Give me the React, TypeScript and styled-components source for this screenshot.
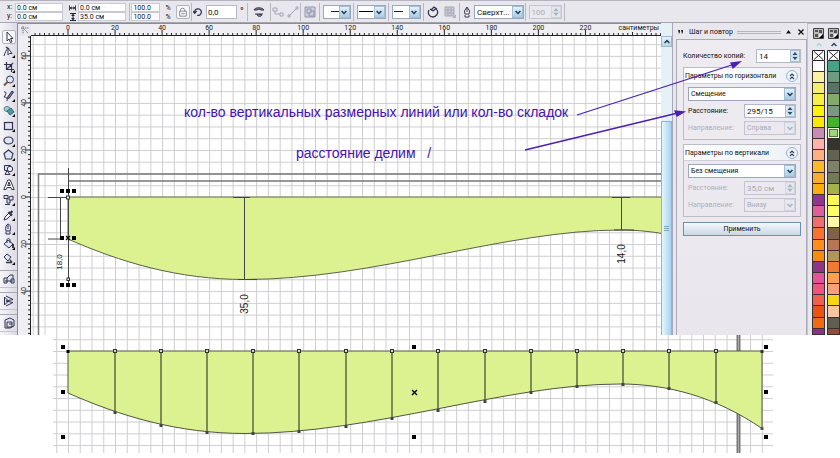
import React from "react";
import styled, { createGlobalStyle, css } from "styled-components";

const GlobalStyle = createGlobalStyle`
  * { box-sizing: border-box; }
  body { margin: 0; background: #fff; }
  button, input, select { font: inherit; color: inherit; margin: 0; }
`;

const line = "#a9a9b8";
const face = "#e9e7ee";

const Page = styled.main`
  position: relative;
  width: 100%;
  font: 7px/10px Roboto, "Open Sans", sans-serif;
  color: #111;
`;

const Workspace = styled.section`
  background: ${face};
`;

/* ---------- property bar ---------- */

const PropertyBar = styled.header`
  display: flex;
  align-items: stretch;
  height: 23px;
  padding: 2px 4px 1px 3px;
  border-top: 1px solid #b5b4be;
  border-bottom: 1px solid #a5a5ae;
  overflow: hidden;
`;

const Group = styled.div<{ $w: number; $gap?: number }>`
  display: flex;
  flex: 0 0 ${(p) => p.$w}px;
  align-items: center;
  justify-content: center;
  gap: ${(p) => p.$gap ?? 2}px;
  border-right: 1px solid #b9b8c4;
`;

const FieldStack = styled.div`
  display: grid;
  grid-template-rows: 9px 9px;
`;

const StackRow = styled.label`
  display: flex;
  align-items: center;
  gap: 2px;
  line-height: 9px;
`;

const Mark = styled.span`
  display: flex;
  justify-content: center;
  width: 7px;
`;

const SmallField = styled.input<{ $w: number }>`
  width: ${(p) => p.$w}px;
  height: 9px;
  padding: 0 1px;
  border: 1px solid #c9c8d4;
  background: #fff;
  line-height: 7px;
`;

const AngleField = styled.input`
  width: 31px;
  height: 14px;
  padding: 0 1px;
  border: 1px solid #b9b8c6;
  background: #fff;
  font-size: 8px;
`;

const Degree = styled.span`
  width: 6px;
  font-size: 10px;
`;

const ToolButton = styled.button<{ $boxed?: boolean }>`
  display: flex;
  flex: none;
  align-items: center;
  justify-content: center;
  width: 14px;
  height: 14px;
  padding: 0;
  border: 1px solid ${(p) => (p.$boxed ? "#b4b3c2" : "transparent")};
  border-radius: 2px;
  background: ${(p) => (p.$boxed ? "#f7f7fa" : "transparent")};
`;

const SelectBox = styled.div<{ $w?: number; $large?: boolean }>`
  position: relative;
  height: 14px;
  ${(p) => (p.$w ? css`flex: 0 0 ${p.$w}px;` : css`flex: 1;`)}
  min-width: 0;
  font-size: ${(p) => (p.$large ? 8 : 7)}px;
`;

const Select = styled.select`
  appearance: none;
  display: block;
  width: 100%;
  height: 14px;
  padding: 0 12px 0 2px;
  border: 1px solid #9aa7bd;
  border-radius: 0;
  background: #fff;
  line-height: 11px;
  &:disabled { background: #ebe9ef; border-color: #c5c4d0; color: #a9a9b4; opacity: 1; }
`;

const DropArrow = styled.span<{ $off?: boolean }>`
  position: absolute;
  top: 1px;
  right: 1px;
  display: flex;
  align-items: center;
  justify-content: center;
  width: 11px;
  height: 12px;
  background: ${(p) => (p.$off ? "#e7e7ef" : "linear-gradient(#e4f2fb, #a9cbe2)")};
  border: 1px solid ${(p) => (p.$off ? "#d2d3de" : "#a3bfd4")};
  pointer-events: none;
`;

const LineSample = styled.svg`
  position: absolute;
  top: 5px;
  left: 2px;
  pointer-events: none;
`;

const Chevron = ({ up, color = "#1d3c58" }: { up?: boolean; color?: string }) => (
  <svg width="6" height="5" viewBox="0 0 6 5">
    <path d={up ? "M.6 4 3 1.500 5.400 4" : "M.6 1 3 3.500 5.400 1"} fill="none" stroke={color} strokeWidth="1.500" />
  </svg>
);

type DropProps = { label: string; value?: string; w?: number; off?: boolean; large?: boolean; children?: React.ReactNode };
const Drop = ({ label, value = "", w, off, large, children }: DropProps) => (
  <SelectBox $w={w} $large={large}>
    <Select aria-label={label} disabled={off} defaultValue={value}>
      <option>{value}</option>
    </Select>
    {children}
    <DropArrow $off={off}><Chevron color={off ? "#a6b2c2" : undefined} /></DropArrow>
  </SelectBox>
);

/* ---------- icons ---------- */

const ink = "#33334c";
const Icon = ({ children, size = 12, color = ink }: { children: React.ReactNode; size?: number; color?: string }) => (
  <svg width={size} height={size} viewBox="0 0 12 12" fill="none" stroke={color} strokeWidth="1" aria-hidden="true">
    {children}
  </svg>
);
const Flyout = () => <path d="M12 9v3H9z" fill="#000" stroke="none" />;

const tools: { name: string; art: React.ReactNode; flat?: boolean }[] = [
  { name: "Pick", flat: true, art: <path d="M4 1v9l2-2 1.5 3.5 1.5-.7L7.5 7.5H10z" fill="#fff" /> },
  { name: "Shape", art: <><path d="M1 10C2 7 3 4 5 2M5 2v7l1.500-1.500h2.500z" fill="#fff" /><path d="M3 1l3 2" strokeWidth="1.500" /></> },
  { name: "Crop", art: <path d="M3.500 1v7.500H11M1 3.500h7.500V11M3.500 8.500 10 2" strokeWidth="1.200" /> },
  { name: "Zoom", art: <><circle cx="7" cy="4.500" r="3.500" fill="#dce6f4" /><path d="M4.500 7 1 10.500" stroke="#765b45" strokeWidth="2" /></> },
  { name: "Freehand", art: <><path d="M1 2c3-1 2 3 0 5 2 0 4 1 3 4" /><path d="M4 8 9 1l1.500 1L6 8.500z" fill="#777b92" /></> },
  { name: "Smart fill", art: <><ellipse cx="4" cy="4" rx="3" ry="2.500" fill="#9cced2" stroke="#54888f" /><path d="M4 6l4-3 3 4-4 3z" fill="#4b9ca2" stroke="#2f6570" /></> },
  { name: "Rectangle", art: <rect x="1.500" y="2.500" width="8" height="7" fill="#dfe4f4" strokeWidth="1.200" /> },
  { name: "Ellipse", art: <ellipse cx="5.500" cy="5.500" rx="4.500" ry="3.500" fill="#dfe4f4" strokeWidth="1.200" /> },
  { name: "Polygon", art: <path d="M5.500 1 10 4.500 8.500 10h-6L1 4.500z" fill="#dfe4f4" strokeWidth="1.100" /> },
  { name: "Basic shapes", art: <><path d="M1.500 1.500h6v5h-6z" fill="#dfe4f4" /><circle cx="7" cy="5" r="2.700" fill="#eef" /><path d="M2 10.500l2-4 3 4z" fill="#dfe4f4" /></> },
  { name: "Text", flat: true, art: <path d="M.8 10.500h2.400L4 8.500h4l.8 2h2.400L7.200 1H4.800zM4.700 6.500 6 3l1.300 3.500z" fill="#fff" /> },
  { name: "Blend", art: <><path d="M1 1.500h4v3H1zM6 3l4-1v4H6zM4 5v4h3V6" fill="#dfe4f4" /><path d="M2 10.500h5" /></> },
  { name: "Eyedropper", art: <><path d="M1 11l1-3 4-4 2 2-4 4z" fill="#f4f4fb" /><path d="M5.500 3l3.500 3.500M7 4.500 9.500 2" strokeWidth="2.200" /></> },
  { name: "Outline", art: <path d="M5 1c3 1 3 4 2 7H3C2 5 3 2 5 1zM5 2v4M3 8.500v2.500h4V8.500" fill="#dfe4f4" /> },
  { name: "Fill", art: <><path d="M1 6l4-4 5 4-4 4z" fill="#dfe4f4" /><path d="M4 5V2c0-2 3-2 3 0v3" /><path d="M10 6v4" stroke="#111" strokeWidth="1.600" /></> },
  { name: "Interactive fill", art: <><path d="M1 4l3-3 4 3-3 4z" fill="#dfe4f4" /><path d="M3 9.500h6M7 7l2 2.500" strokeWidth="1.500" /></> },
];

const extras: { name: string; art: React.ReactNode }[] = [
  { name: "Wrap text", art: <><path d="M1 10V5h3v5zM4 5l3-3h3v4M8 6h3v4H8z" fill="#dfe4f4" /><path d="M2 8h8" /></> },
  { name: "Mirror", art: <path d="M1.500 2v8l4-4zM3 1l7 3.500L3 6M3 11l7-3.500L3 6" fill="#dfe4f4" /> },
  { name: "Convert", art: <><path d="M2 3l5-2 4 2v6l-4 2H2z" fill="#dfe4f4" /><path d="M4 5h5v5H4zM6 7h3" /></> },
];

const Main = styled.div`
  display: flex;
  min-height: 312px;
`;

const Toolbox = styled.nav`
  flex: 0 0 18px;
  display: flex;
  flex-direction: column;
  gap: 4px;
  padding-top: 7px;
  border-right: 1px solid #8c8c99;
  background: linear-gradient(90deg, #f6f5f9, #dcdbe5);
`;

const ToolColumn = styled.div`
  display: flex;
  flex-direction: column;
  align-items: center;
  justify-content: space-between;
  height: 236px;
`;

const ExtraTool = styled.div`
  display: flex;
  justify-content: center;
  padding: 1px 0;
  border-top: 1px solid #a9a8b8;
  border-bottom: 1px solid #c4c3d0;
`;

/* ---------- drawing window ---------- */

const DrawWindow = styled.div`
  flex: 1;
  min-width: 0;
  display: grid;
  grid-template: 13px 1fr / 13px minmax(0, 1fr);
`;

const Corner = styled.div`
  display: flex;
  align-items: center;
  justify-content: center;
  border-top: 1px solid #8c8c99;
  background: ${face};
`;

const TopRulerBox = styled.div`
  position: relative;
  border-top: 1px solid #8c8c99;
  background: #efeef2;
  overflow: hidden;
`;

const Units = styled.span`
  position: absolute;
  top: 0;
  right: 2px;
  padding-left: 2px;
  background: #efeef2;
  line-height: 8px;
`;

const SideRulerBox = styled.div`
  background: #efeef2;
  overflow: hidden;
`;

const Canvas = styled.div`
  position: relative;
  background: #fff;
  overflow: hidden;
`;

const Drawing = styled.svg`
  display: block;
  width: 100%;
  height: 100%;
`;

const Note = styled.p<{ $x: number; $y: number }>`
  position: absolute;
  left: ${(p) => p.$x}px;
  top: ${(p) => p.$y}px;
  margin: 0;
  color: #4413b0;
  font: 14px/16px "Liberation Sans", Arial, sans-serif;
  white-space: pre;
`;

const range = (from: number, to: number) => Array.from({ length: to - from }, (_, i) => from + i);
const unit = 2.352;

const TopRuler = () => (
  <TopRulerBox>
    <Drawing>
      <g stroke="#222" strokeWidth="1">
        <path d="M0 11.5H3000" />
        {range(-7, 500).map((n) => {
          const x = 37 + n * 2 * unit;
          return <path key={n} d={`M${x} ${n % 10 === 0 ? 6 : 9}V12`} />;
        })}
      </g>
      <g fontSize="7" textAnchor="middle" fill="#222">
        {range(0, 12).map((n) => <text key={n} x={37 + n * 20 * unit} y="6">{n * 20}</text>)}
      </g>
    </Drawing>
    <Units>сантиметры</Units>
  </TopRulerBox>
);

const SideRuler = () => (
  <SideRulerBox>
    <Drawing>
      <g stroke="#222" strokeWidth="1">
        <path d="M12.500 0V3000" />
        {range(-34, 300).map((n) => {
          const y = 161 + n * 2 * unit;
          return <path key={n} d={`M${n % 10 === 0 ? 7 : 10} ${y}H13`} />;
        })}
      </g>
      <g fontSize="7" textAnchor="middle" fill="#222">
        {[-60, -40, -20, 0, 20, 40].map((n) => (
          <text key={n} transform={`translate(8 ${161 + n * unit}) rotate(-90)`}>{Math.abs(n)}</text>
        ))}
      </g>
    </Drawing>
  </SideRulerBox>
);

const Grid = ({ id, x, y }: { id: string; x: number; y: number }) => (
  <pattern id={id} x={x} y={y} width="11.760" height="11.760" patternUnits="userSpaceOnUse">
    <path d="M.5 0V12M0 .5H12" stroke="#cdccd0" strokeWidth="1" />
  </pattern>
);

const hem = "M68 42C120 65 178 82.500 245 82.500C375 82.500 505 33 620 33C668 33 716 46 762 77.500";
const shape = `${hem}V0H68Z`;

const Handles = ({ points }: { points: number[][] }) => (
  <g fill="#000">
    {points.map(([x, y]) => <rect key={`${x}-${y}`} x={x - 2} y={y - 2} width="4" height="4" />)}
  </g>
);

const MainDrawing = () => (
  <Drawing>
    <defs><Grid id="grid-main" x={68} y={197} /></defs>
    <g transform="translate(-31 -36)">
      <rect x="31" y="36" width="3000" height="2000" fill="url(#grid-main)" />
      <path d="M38.500 2000V174H3000" fill="none" stroke="#777" strokeWidth="1.500" />
      <path d="M68 181H3000" stroke="#777" strokeWidth="1.500" />
      <g transform="translate(0 197)"><path d={shape} fill="#dcf18f" stroke="#59624a" /></g>
      <g stroke="#444" fill="none">
        <path d="M68.500 168V284M48 197.500H68M48 239H61M60.500 197V239" />
        <path d="M244.500 197V279M233 197.500H250M238 279.500H257" />
        <path d="M621.500 197V230M612 197.500H630M614 230H634" />
      </g>
      <g stroke="#333" fill="#eee"><rect x="66.500" y="196" width="3" height="3" /><rect x="67" y="278" width="2.500" height="2.500" /></g>
      <Handles points={[[62, 191], [68, 191], [74, 191], [62, 238], [74, 238], [62, 285], [68, 285], [74, 285]]} />
      <path d="M66 236l4 4M70 236l-4 4" stroke="#000" strokeWidth="1.300" />
      <g fontFamily="Liberation Sans, Arial, sans-serif" fill="#222" textAnchor="middle">
        <text fontSize="8" transform="translate(62 262) rotate(-90)">18,0</text>
        <text fontSize="10" transform="translate(248 304) rotate(-90)">35,0</text>
        <text fontSize="10" transform="translate(625 254) rotate(-90)">14,0</text>
      </g>
    </g>
  </Drawing>
);

/* ---------- docker ---------- */

const ScrollTrack = styled.div`
  flex: 0 0 11px;
  display: flex;
  flex-direction: column;
  padding-top: 13px;
  background: #e6f1f7;
`;

const ScrollUp = styled.button`
  display: flex;
  align-items: center;
  justify-content: center;
  height: 11px;
  padding: 0;
  border: 1px solid #9fb9cc;
  background: linear-gradient(#e6f3fb, #b8d4e6);
`;

const ScrollThumb = styled.div`
  flex: 1;
  display: flex;
  align-items: center;
  justify-content: center;
  margin-top: 74px;
  border: 1px solid #8fb4d0;
  border-bottom: 0;
  background: linear-gradient(90deg, #e6f6ff, #a6d2ee);
`;

const Docker = styled.aside`
  flex: 0 0 135px;
  display: flex;
  flex-direction: column;
  min-width: 0;
  padding-left: 3px;
  border-left: 1px solid #a9a8b8;
`;

const DockerTitle = styled.div`
  display: flex;
  align-items: center;
  gap: 3px;
  height: 16px;
  padding: 2px 2px 0;
`;

const DockerHeading = styled.h2`
  margin: 0 1px 0 2px;
  font: inherit;
`;

const TitleGrip = styled.span`
  flex: 1;
  height: 3px;
  border: solid #b4b3be;
  border-width: 1px 0;
`;

const PlainButton = styled.button`
  display: flex;
  align-items: center;
  justify-content: center;
  width: 9px;
  height: 9px;
  padding: 0;
  border: 0;
  background: none;
`;

const DockerBody = styled.form`
  flex: 1;
  padding: 9px 5px 0 6px;
  border: solid ${line};
  border-width: 1px 1px 0 1px;
  background: linear-gradient(#eeebf1, #e9e7ed);
`;

const FormRow = styled.div`
  display: flex;
  align-items: center;
  justify-content: space-between;
  height: 14px;
`;

const FormLabel = styled.label<{ $off?: boolean }>`
  color: ${(p) => (p.$off ? "#b0afba" : "#111")};
  white-space: nowrap;
`;

const Spin = styled.span<{ $w: number }>`
  position: relative;
  flex: 0 0 ${(p) => p.$w}px;
`;

const SpinInput = styled.input`
  display: block;
  width: 100%;
  height: 14px;
  padding: 0 12px 0 2px;
  border: 1px solid #b3b9c9;
  background: #fff;
  font-size: 8px;
  &:disabled { background: #ebe9ef; color: #a9a9b4; border-color: #c5c4d0; }
`;

const SpinArrows = styled.span<{ $off?: boolean }>`
  position: absolute;
  top: 1px;
  right: 1px;
  display: grid;
  background: ${(p) => (p.$off ? "#e6e8ee" : "#dbe8f0")};
  border: 1px solid ${(p) => (p.$off ? "#d2d5de" : "#adc0cf")};
`;

const Spinner = ({ id, value, w, off, label }: { id: string; value: string; w: number; off?: boolean; label?: string }) => (
  <Spin $w={w}>
    <SpinInput id={id} defaultValue={value} disabled={off} aria-label={label} />
    <SpinArrows $off={off}>
      <svg width="8" height="10" viewBox="0 0 8 10" fill={off ? "#a5b6c6" : "#24506f"}>
        <path d="M1.500 4 4 1l2.500 3zM1.500 6 4 9l2.500-3z" />
        <path d="M0 4.800h8v.5H0z" fill="#9ab1c2" />
      </svg>
    </SpinArrows>
  </Spin>
);

const Panel = styled.fieldset`
  min-width: 0;
  margin: 4px 0 0;
  padding: 0;
  border: 1px solid #bdbcc9;
`;

const PanelHead = styled.div`
  display: flex;
  align-items: center;
  justify-content: space-between;
  height: 16px;
  padding: 0 2px 0 1px;
  border-bottom: 1px solid #cfcfda;
  background: linear-gradient(90deg, #fff, #edf1f7);
  white-space: nowrap;
`;

const RoundButton = styled.button`
  display: flex;
  align-items: center;
  justify-content: center;
  width: 12px;
  height: 12px;
  padding: 0;
  border: 1px solid #9db1c9;
  border-radius: 50%;
  background: #eef5fb;
`;

const PanelBody = styled.div`
  display: grid;
  gap: 3px;
  padding: 3px 4px 4px;
`;

const Apply = styled.button`
  display: block;
  width: 100%;
  height: 14px;
  margin-top: 5px;
  padding: 0;
  border: 1px solid #6f8fae;
  background: linear-gradient(#f4f8fb, #c9d8e4);
  line-height: 11px;
`;

type PanelProps = { id: string; title: string; mode: string; distance: string; direction: string; off?: boolean };
const OffsetPanel = ({ id, title, mode, distance, direction, off }: PanelProps) => (
  <Panel aria-label={title}>
    <PanelHead>
      <span>{title}</span>
      <RoundButton type="button" aria-label={`Свернуть: ${title}`}>
        <svg width="8" height="8" viewBox="0 0 8 8" fill="none" stroke="#26476a" strokeWidth="1.200">
          <path d="M2 4 4 2l2 2M2 7l2-2 2 2" />
        </svg>
      </RoundButton>
    </PanelHead>
    <PanelBody>
      <FormRow><Drop label={title} value={mode} /></FormRow>
      <FormRow>
        <FormLabel $off={off} htmlFor={id}>Расстояние:</FormLabel>
        <Spinner id={id} value={distance} w={52} off={off} />
      </FormRow>
      <FormRow>
        <FormLabel as="span" $off>Направление:</FormLabel>
        <Drop label={`Направление: ${title}`} value={direction} w={52} off />
      </FormRow>
    </PanelBody>
  </Panel>
);

/* ---------- palettes ---------- */

const Palettes = styled.div`
  flex: 0 0 33px;
  display: flex;
  justify-content: flex-end;
  gap: 2px;
  padding: 4px 0 0;
  border-left: 1px solid #c5c4d0;
  border-top: 1px solid #b9b8c4;
`;

const PaletteColumn = styled.div`
  flex: 0 0 13px;
  display: flex;
  flex-direction: column;
  overflow: hidden;
`;

const PaletteButton = styled.button`
  flex: 0 0 11px;
  display: flex;
  align-items: center;
  justify-content: center;
  padding: 0;
  border: 0;
  background: transparent;
`;

const Swatch = styled.button<{ $c: string; $half?: boolean; $chosen?: boolean }>`
  flex: ${(p) => (p.$half ? 1 : 2)} 1 0;
  min-height: 0;
  padding: 0;
  border: solid #3b2f30;
  border-width: 0 1px 1px;
  background: ${(p) => p.$c};
  ${(p) => p.$chosen && css`box-shadow: inset 0 0 0 1px #e8ffd8, inset 0 0 0 2px #4f7a3c;`}
`;

const warm = ["#fff", "#f6f3a4", "#f2ef6e", "#f5f048", "#fff200", "#fbe800", "#c68db4", "#ffb1aa", "#ffb080", "#ffb730", "#f9ad28", "#ffad0c", "#8e3690", "#df5f9b", "#ef6f70", "#fa7230", "#ff8c1c", "#f98a10", "#8e3586", "#e2559a", "#ee5578", "#f0604c", "#ea5410", "#f06a10", "#8e2f80"];
const mixed = ["#48a184", "#6d9b80", "#577467", "#82aa69", "#789a7d", "#45b22e", "#a0d580", "#36352d", "#626252", "#7f8068", "#727a58", "#a3b348", "#fffb50", "#fdff62", "#fffca8", "#816149", "#b67553", "#b09658", "#ef7a31", "#ffa14c", "#f8a178", "#f8d412", "#ffc3a0", "#5e5f4f", "#904c3c"];

const Palette = ({ colors, name, chosen, off }: { colors: string[]; name: string; chosen?: number; off?: boolean }) => (
  <PaletteColumn>
    <PaletteButton aria-label={`${name}: меню`}>
      <svg width="11" height="11" viewBox="0 0 11 11">
        <path d="M.5.5h10v10H.5z" fill="#bbb" stroke="#444" />
        <path d="M2 2h3v2H2zM6 2h3v3H6zM2 6h3v3H2z" fill="#555" />
        <path d="M6 6h3v3H6z" fill="#eee" />
        <path d="M10 6v4H6z" fill="#000" />
      </svg>
    </PaletteButton>
    <PaletteButton aria-label={`${name}: вверх`}><Chevron up color={off ? "#add3dd" : "#214b5e"} /></PaletteButton>
    <PaletteButton aria-label={`${name}: нет цвета`}>
      <svg width="13" height="11" viewBox="0 0 13 11" stroke="#222">
        <path d="M.5.5h12v10H.5z" fill="#fff" /><path d="M2 1.500l9 8M11 1.500l-9 8" />
      </svg>
    </PaletteButton>
    {colors.map((c, i) => (
      <Swatch key={i} $c={c} $half={i === colors.length - 1} $chosen={i === chosen} aria-label={`${name} ${i + 1}`} />
    ))}
  </PaletteColumn>
);

/* ---------- lower figure and arrows ---------- */

const Figure = styled.figure`
  height: 118px;
  margin: 0 0 5px 52px;
`;

const stitches: [number, number][] = [
  [115, 412], [161, 425], [207, 432], [253, 433], [299, 431], [346, 426], [392, 418], [438, 410],
  [485, 401], [531, 392], [577, 386], [623, 384], [669, 388], [716, 402],
];

const CopiesDrawing = () => (
  <Drawing role="img" aria-label="Шаг и повтор">
    <defs><Grid id="grid-copies" x={68} y={351} /></defs>
    <g transform="translate(-52 -335)">
      <rect x="53" y="335" width="720" height="118" fill="url(#grid-copies)" />
      <path d="M738.500 335V453" stroke="#777" strokeWidth="4" />
      <path d="M738.500 335V453" stroke="#aaa" strokeWidth="1" />
      <g transform="translate(0 351)"><path d={shape} fill="#dcf18f" stroke="#4d5740" /></g>
      {stitches.map(([x, y]) => (
        <g key={x}>
          <path d={`M${x} 351V${y}`} stroke="#49563a" strokeWidth="1.300" />
          <rect x={x - 1.5} y="349.500" width="3" height="3" fill="#d8d8c8" stroke="#333" />
          <rect x={x - 1.5} y={y - 1} width="3" height="3" fill="#444" />
        </g>
      ))}
      <rect x="66.500" y="350" width="3" height="3" fill="#000" />
      <rect x="760.500" y="350" width="3" height="3" fill="#333" />
      <rect x="760.500" y="427" width="3" height="3" fill="#555" />
      <Handles points={[[63, 347], [63, 392], [63, 437], [414, 347], [414, 437], [766, 347], [766, 392], [766, 437]]} />
      <path d="M412 390l5 5M417 390l-5 5" stroke="#000" strokeWidth="1.400" />
    </g>
  </Drawing>
);

const Arrows = styled.svg`
  position: absolute;
  top: 50px;
  right: 80px;
  pointer-events: none;
`;

export default function App() {
  return (
    <Page>
      <GlobalStyle />
      <Workspace>
        <PropertyBar>
          <Group $w={127} $gap={6}>
            <FieldStack>
              <StackRow><Mark>x:</Mark><SmallField $w={48} defaultValue="0.0 см" /></StackRow>
              <StackRow><Mark>y:</Mark><SmallField $w={48} defaultValue="0.0 см" /></StackRow>
            </FieldStack>
            <FieldStack>
              <StackRow>
                <Mark><svg width="8" height="6" viewBox="0 0 8 6" role="img" aria-label="Ширина"><path d="M.5 0v6M7.500 0v6M1 3h6" stroke="#223" /><path d="M1 3l2-2v4zM7 3 5 1v4z" fill="#223" /></svg></Mark>
                <SmallField $w={48} defaultValue="0.0 см" />
              </StackRow>
              <StackRow>
                <Mark><svg width="6" height="8" viewBox="0 0 6 8" role="img" aria-label="Высота"><path d="M0 .5h6M0 7.500h6M3 1v6" stroke="#223" /><path d="M3 1l2 2H1zM3 7l2-2H1z" fill="#223" /></svg></Mark>
                <SmallField $w={48} defaultValue="35.0 см" />
              </StackRow>
            </FieldStack>
          </Group>
          <Group $w={62} $gap={5}>
            <FieldStack>
              <SmallField $w={29} defaultValue="100.0" aria-label="Масштаб X" />
              <SmallField $w={29} defaultValue="100.0" aria-label="Масштаб Y" />
            </FieldStack>
            <FieldStack><span>%</span><span>%</span></FieldStack>
            <ToolButton aria-label="Пропорции" $boxed>
              <Icon size={10} color="#777785"><path d="M3 5V3c0-2 5-2 5 0v2M2 5h8v6H2zM4 8h4" /></Icon>
            </ToolButton>
          </Group>
          <Group $w={56} $gap={3}>
            <Icon size={10}><path d="M2 6a4 4 0 1 1 3 4M0 5l2 2.500L4.500 5" strokeWidth="1.500" /></Icon>
            <AngleField defaultValue="0,0" aria-label="Угол поворота" />
            <Degree>°</Degree>
          </Group>
          <Group $w={23}>
            <Icon><path d="M1 4c1-3 8-3 10 0H8L6 3 4 4zM2 8h8M4 8c0 3 4 3 5 1L6 8" fill="#8a8aa0" /></Icon>
          </Group>
          <Group $w={30} $gap={3}>
            <Icon color="#a5a5b2"><path d="M1 2h4v3H1zM3 5v3h5M8 7h3v3H8z" /></Icon>
            <Icon color="#a5a5b2"><path d="M1 9h2v2H1zM9 1h2v2H9zM3 9l6-6" /></Icon>
          </Group>
          <Group $w={19}>
            <ToolButton aria-label="Группа"><Icon color="#9494ab"><path d="M1 1h10v10H1zM3 3h4v4H3zM6 5h4v5H5V7" fill="#cdcde0" /></Icon></ToolButton>
          </Group>
          <Group $w={34}>
            <Drop label="Начальная стрелка" w={28}><LineSample width="14" height="3"><path d="M6 1.500h8" stroke="#222" /></LineSample></Drop>
          </Group>
          <Group $w={35}>
            <Drop label="Стиль линии" w={29}><LineSample width="14" height="3"><path d="M0 1.500h14" stroke="#000" /></LineSample></Drop>
          </Group>
          <Group $w={35}>
            <Drop label="Конечная стрелка" w={29}><LineSample width="14" height="3"><path d="M0 1.500h9" stroke="#222" /></LineSample></Drop>
          </Group>
          <Group $w={36} $gap={3}>
            <ToolButton aria-label="Замкнуть кривую"><Icon><path d="M2 4C0 8 3 11 6 11s6-4 4-7c-1-2-3 0-4 1M4 4l3-3 3 2M6 5 3 3" strokeWidth="1.300" /></Icon></ToolButton>
            <ToolButton aria-label="Обтекание"><Icon color="#a6a6b5"><path d="M1 1h9v9H1zM1 4h9M1 7h9M4 1v9M7 1v9M12 9v3H9z" fill="#d0d0dc" /></Icon></ToolButton>
          </Group>
          <Group $w={66} $gap={1}>
            <Icon><path d="M6 1 3.500 5 4 8h4l.500-3zM6 2v4M4 9v2h4V9" fill="#fff" /></Icon>
            <Drop label="Толщина контура" value="Сверхт..." w={50} large />
          </Group>
          <Group $w={39}>
            <Spinner id="smooth" value="100" w={33} off label="Сглаживание" />
          </Group>
        </PropertyBar>

        <Main>
          <Toolbox aria-label="Инструменты">
            <ToolColumn>
              {tools.map((t) => (
                <ToolButton key={t.name} aria-label={t.name} $boxed={t.name === "Pick"}>
                  <Icon>{t.art}{!t.flat && <Flyout />}</Icon>
                </ToolButton>
              ))}
            </ToolColumn>
            {extras.map((t) => (
              <ExtraTool key={t.name}><ToolButton aria-label={t.name}><Icon>{t.art}</Icon></ToolButton></ExtraTool>
            ))}
          </Toolbox>

          <DrawWindow>
            <Corner><Icon size={8}><path d="M3 0v12M0 3h12M5 5l6 6" strokeDasharray="2 1" /></Icon></Corner>
            <TopRuler />
            <SideRuler />
            <Canvas>
              <MainDrawing />
              <Note $x={153} $y={68}>кол-во вертикальных размерных линий или кол-во складок</Note>
              <Note $x={265} $y={109}>{"расстояние делим   /"}</Note>
            </Canvas>
          </DrawWindow>

          <ScrollTrack>
            <ScrollUp aria-label="Вверх"><Chevron up /></ScrollUp>
            <ScrollThumb><svg width="5" height="6"><path d="M0 .5h5M0 2.500h5M0 4.500h5" stroke="#7ca6c4" /></svg></ScrollThumb>
          </ScrollTrack>

          <Docker>
            <DockerTitle>
              <svg width="6" height="6" viewBox="0 0 6 6"><path d="M0 1h2v2L1 5zM3 1h2v2L4 5z" fill="#222" /></svg>
              <DockerHeading>Шаг и повтор</DockerHeading>
              <TitleGrip />
              <PlainButton aria-label="Свернуть"><svg width="5" height="4"><path d="M0 3.500 2.500 0 5 3.500z" fill="#111" /></svg></PlainButton>
              <PlainButton aria-label="Закрыть"><svg width="6" height="6"><path d="M.5.5l5 5M5.500.5l-5 5" stroke="#111" strokeWidth="1.300" /></svg></PlainButton>
            </DockerTitle>
            <DockerBody onSubmit={(e) => e.preventDefault()}>
              <FormRow>
                <FormLabel htmlFor="copies">Количество копий:</FormLabel>
                <Spinner id="copies" value="14" w={45} />
              </FormRow>
              <OffsetPanel id="dx" title="Параметры по горизонтали" mode="Смещение" distance="295/15" direction="Справа" />
              <OffsetPanel id="dy" title="Параметры по вертикали" mode="Без смещения" distance="35,0 см" direction="Внизу" off />
              <Apply type="submit">Применить</Apply>
            </DockerBody>
          </Docker>

          <Palettes>
            <Palette name="Палитра" colors={warm} off />
            <Palette name="Палитра 2" colors={mixed} chosen={6} />
          </Palettes>
        </Main>
      </Workspace>

      <Figure><CopiesDrawing /></Figure>

      <Arrows width="240" height="110" viewBox="520 50 240 110" fill="none" stroke="#4a1fb5" strokeWidth="1.300">
        <path d="M577 115 738 63M525 150 682 112" />
        <path d="M740 62l-9 1 2 5zM684 112l-9-1 2 5z" fill="#4a1fb5" />
      </Arrows>
    </Page>
  );
}
